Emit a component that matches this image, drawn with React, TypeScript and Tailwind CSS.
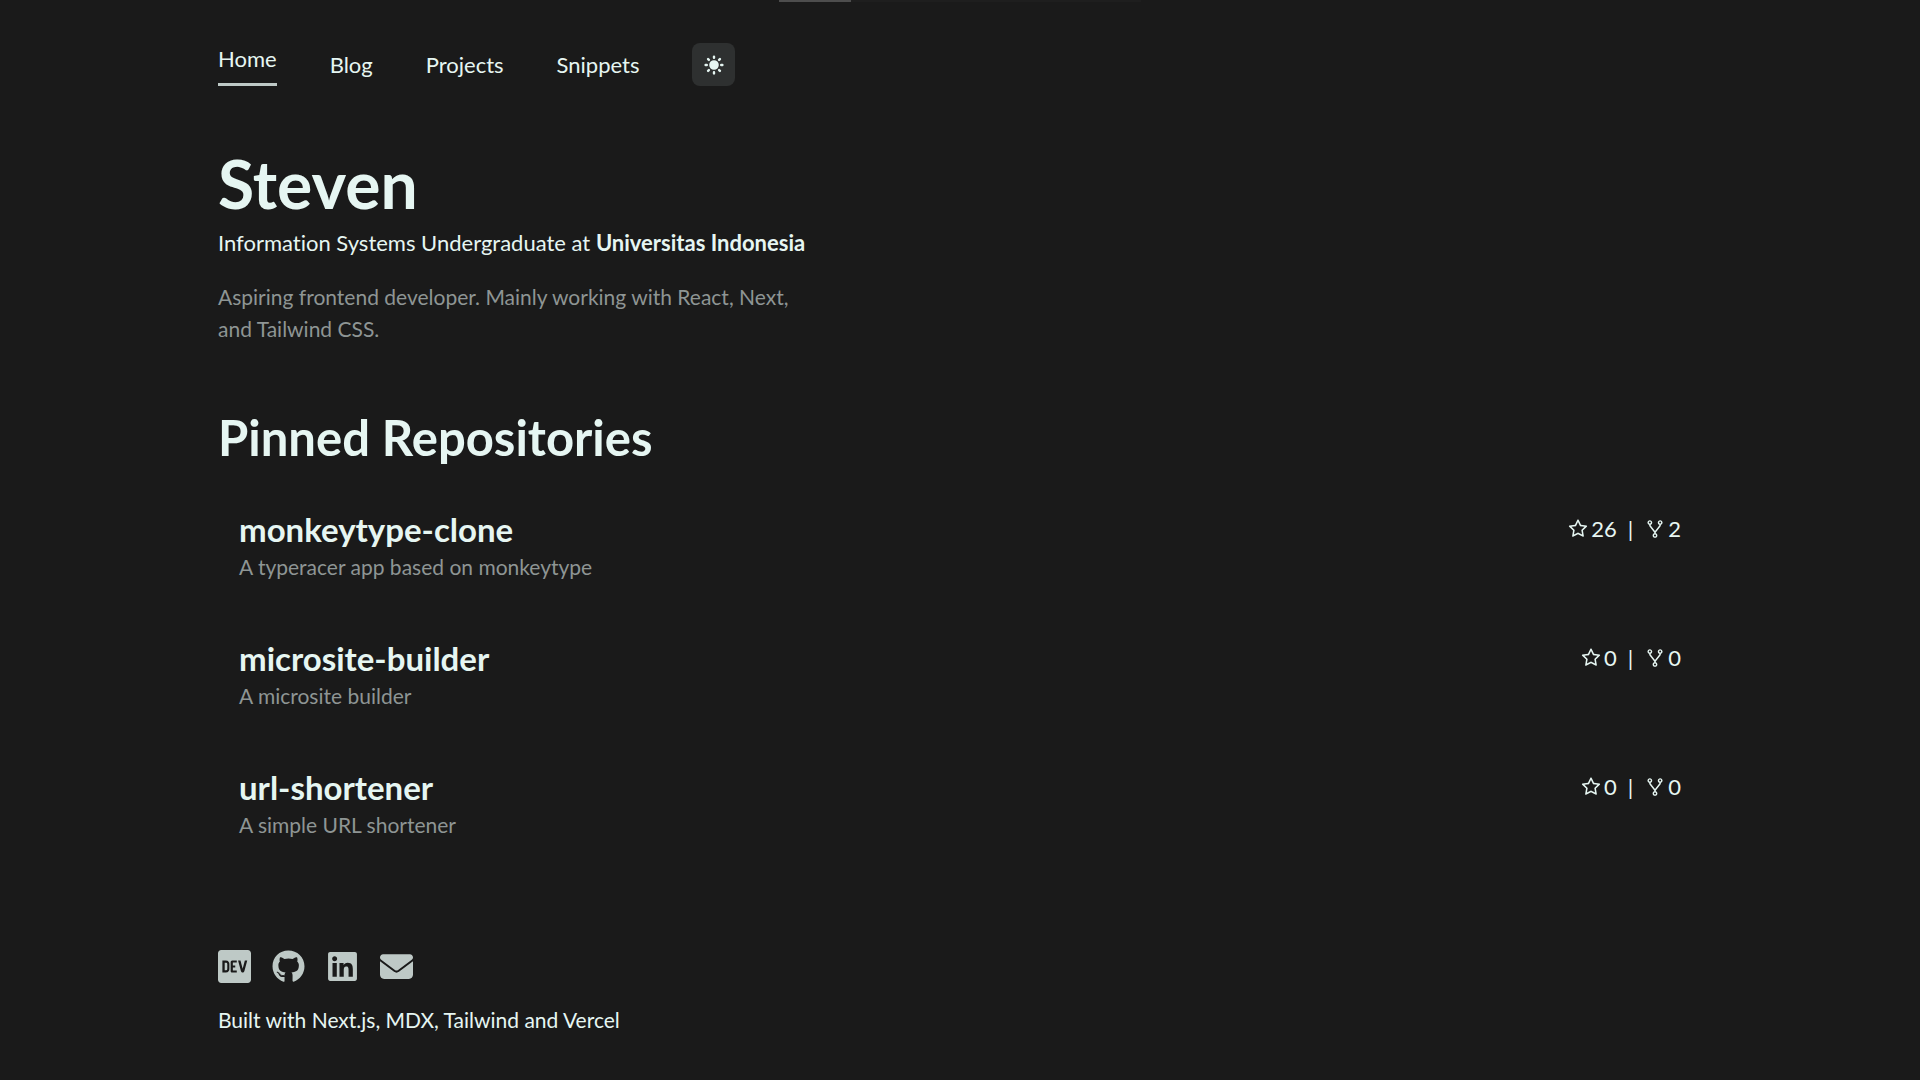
import { AiOutlineFork, AiOutlineStar } from "react-icons/ai";
import { FaDev, FaGithub, FaLinkedin } from "react-icons/fa";
import { FaEnvelope } from "react-icons/fa6";
import { HiSun } from "react-icons/hi";

const links = ["Blog", "Projects", "Snippets"];

const repositories = [
  { name: "monkeytype-clone", description: "A typeracer app based on monkeytype", stars: 26, forks: 2 },
  { name: "microsite-builder", description: "A microsite builder", stars: 0, forks: 0 },
  { name: "url-shortener", description: "A simple URL shortener", stars: 0, forks: 0 },
];

// The DEV badge is cropped to its square so it fills the same box as its neighbours.
const socials = [
  { label: "DEV", Icon: FaDev, viewBox: "0 32 448 448" },
  { label: "GitHub", Icon: FaGithub },
  { label: "LinkedIn", Icon: FaLinkedin },
  { label: "Email", Icon: FaEnvelope },
];

function LoadingBar() {
  return (
    <div className="flex h-[2px] justify-center">
      <div className="w-[362px] bg-[#1e1e1e]">
        <div className="h-full w-[72px] bg-[#4d4d4d]" />
      </div>
    </div>
  );
}

function Navigation() {
  return (
    <nav className="flex items-center gap-[53px]">
      <a href="#home" className="border-b-[3px] border-[#bec9c6] pb-2">
        Home
      </a>
      {links.map((link) => (
        <a key={link} href={`#${link.toLowerCase()}`}>
          {link}
        </a>
      ))}
      <button
        type="button"
        aria-label="Toggle theme"
        className="flex size-[43px] items-center justify-center rounded-lg bg-[#2e3030]"
      >
        <HiSun className="size-6" />
      </button>
    </nav>
  );
}

function Repository({ name, description, stars, forks }: (typeof repositories)[number]) {
  return (
    <li>
      <a href={`#${name}`} className="flex items-start justify-between px-[21px] py-[22px]">
        <div>
          <h3 className="text-[33px] leading-[43px] font-bold">{name}</h3>
          <p className="text-[21px] text-[#8e9594]">{description}</p>
        </div>
        <div className="flex items-center pt-[5px]">
          <AiOutlineStar className="mr-0.5 size-[22px]" />
          <span>{stars}</span>
          <span className="mx-[11px]">|</span>
          <AiOutlineFork className="mr-0.5 size-[22px]" />
          <span>{forks}</span>
        </div>
      </a>
    </li>
  );
}

export default function App() {
  return (
    <div className="min-h-screen bg-[#1a1a1a] font-[Lato,sans-serif] text-[22px] leading-8 text-[#e6f6f2] [font-variant-ligatures:none]">
      <LoadingBar />
      <div className="px-[218px] pt-[41px]">
        <header>
          <Navigation />
        </header>
        <main>
          <section className="pt-16">
            <h1 className="text-[66px] leading-[68px] font-bold">Steven</h1>
            <p className="pt-[9px]">
              Information Systems Undergraduate at <strong className="font-bold">Universitas Indonesia</strong>
            </p>
            <p className="max-w-[600px] pt-[22px] text-[21px] text-[#8e9594]">
              Aspiring frontend developer. Mainly working with React, Next, and Tailwind CSS.
            </p>
          </section>
          <section className="pt-[65px]">
            <h2 className="text-[49px] leading-[54px] font-bold">Pinned Repositories</h2>
            <ul className="flex flex-col gap-[10px] pt-[22px]">
              {repositories.map((repository) => (
                <Repository key={repository.name} {...repository} />
              ))}
            </ul>
          </section>
        </main>
        <footer className="pt-[87px]">
          <div className="flex gap-[21px] text-[#bec9c6]">
            {socials.map(({ label, Icon, ...crop }) => (
              <a key={label} href={`#${label.toLowerCase()}`} aria-label={label}>
                <Icon className="size-[33px]" {...crop} />
              </a>
            ))}
          </div>
          <p className="pt-[21px] text-[21px]">Built with Next.js, MDX, Tailwind and Vercel</p>
        </footer>
      </div>
    </div>
  );
}
